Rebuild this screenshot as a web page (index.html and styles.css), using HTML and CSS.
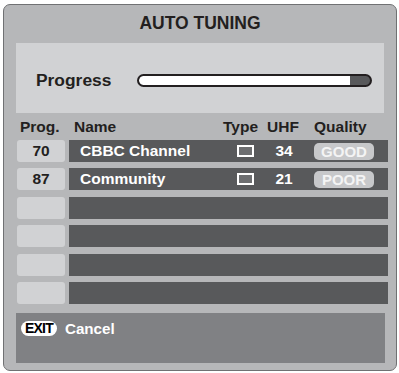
FILE: index.html
```html
<!DOCTYPE html>
<html>
<head>
<meta charset="utf-8">
<link rel="stylesheet" href="styles.css">
</head>
<body>
<div class="panel">
  <div class="title">AUTO TUNING</div>
  <div class="progress-box">
    <span class="progress-label">Progress</span>
    <div class="bar"><div class="bar-fill"></div></div>
  </div>
  <div class="table">
    <div class="row head">
      <div class="prog">Prog.</div>
      <div class="main">
        <span class="name">Name</span>
        <span class="type">Type</span>
        <span class="uhf">UHF</span>
        <span class="quality">Quality</span>
      </div>
    </div>
    <div class="row">
      <div class="prog cell">70</div>
      <div class="main bar-row">
        <span class="name">CBBC Channel</span>
        <span class="type"><span class="tv"></span></span>
        <span class="uhf">34</span>
        <span class="quality"><span class="badge">GOOD</span></span>
      </div>
    </div>
    <div class="row">
      <div class="prog cell">87</div>
      <div class="main bar-row">
        <span class="name">Community</span>
        <span class="type"><span class="tv"></span></span>
        <span class="uhf">21</span>
        <span class="quality"><span class="badge">POOR</span></span>
      </div>
    </div>
    <div class="row"><div class="prog cell"></div><div class="main bar-row"></div></div>
    <div class="row"><div class="prog cell"></div><div class="main bar-row"></div></div>
    <div class="row"><div class="prog cell"></div><div class="main bar-row"></div></div>
    <div class="row"><div class="prog cell"></div><div class="main bar-row"></div></div>
  </div>
  <div class="footer">
    <span class="exit">EXIT</span>
    <span class="cancel">Cancel</span>
  </div>
</div>
</body>
</html>
```
FILE: styles.css
```css
html, body {
  margin: 0;
  padding: 0;
  background: #ffffff;
}
body {
  font-family: "Liberation Sans", Arial, sans-serif;
  font-weight: bold;
  color: #231f20;
}
.panel {
  box-sizing: border-box;
  width: 394px;
  height: 367px;
  margin: 4px 0 0 3px;
  background: #b6b7b9;
  border: 1px solid #707173;
  border-radius: 7px;
  display: flex;
  flex-direction: column;
}
.title {
  height: 38px;
  display: flex;
  align-items: center;
  justify-content: center;
  font-size: 17.5px;
  padding-bottom: 2px;
  box-sizing: border-box;
}
.progress-box {
  box-sizing: border-box;
  margin-left: 12px;
  width: 368px;
  height: 70px;
  background: #d1d2d4;
  display: flex;
  align-items: center;
  padding: 4px 0 0 20px;
}
.progress-label {
  font-size: 17.4px;
  width: 101px;
}
.bar {
  box-sizing: border-box;
  width: 235px;
  height: 13px;
  border: 2px solid #231f20;
  border-radius: 7px;
  background: #58595b;
  overflow: hidden;
}
.bar-fill {
  width: 211px;
  height: 100%;
  background: #ffffff;
  border-radius: 5px 0 0 5px;
}
.table {
  margin-left: 13px;
  display: flex;
  flex-direction: column;
  gap: 6.4px;
  font-size: 15.5px;
}
.row {
  display: grid;
  grid-template-columns: 48px 319px;
  column-gap: 4px;
  height: 22px;
  line-height: 22px;
}
.row.head {
  height: 27px;
  line-height: 27px;
  margin-bottom: -6.4px;
}
.head .prog {
  padding-left: 3px;
}
.cell {
  background: #d1d2d4;
  border-radius: 3px;
  text-align: center;
}
.main {
  display: flex;
  align-items: center;
  padding-left: 11px;
}
.head .main {
  padding-left: 5px;
}
.bar-row {
  background: #58595b;
  color: #ffffff;
}
.name {
  flex: 1;
}
.type {
  width: 29px;
  display: flex;
  align-items: center;
}
.head .type {
  width: 35px;
  margin-right: 9px;
}
.tv {
  box-sizing: border-box;
  width: 17px;
  height: 12px;
  border: 2px solid #ffffff;
  background: #6d6e70;
}
.uhf {
  width: 36px;
  text-align: center;
  margin-right: 12px;
}
.head .uhf {
  width: 31px;
  margin-right: 16px;
}
.quality {
  width: 74px;
  display: flex;
  align-items: center;
}
.badge {
  box-sizing: border-box;
  width: 60px;
  height: 17px;
  line-height: 17px;
  border-radius: 5px;
  background: #c7c8ca;
  color: #f4f4f4;
  text-align: center;
  font-size: 15px;
}
.footer {
  box-sizing: border-box;
  margin: 9px 0 0 12px;
  width: 369px;
  height: 50px;
  background: #808184;
  display: flex;
  align-items: center;
  align-self: flex-start;
  padding: 0 0 18px 5px;
  color: #ffffff;
  font-size: 15.2px;
}
.exit {
  background: #ffffff;
  color: #000000;
  border-radius: 8px;
  height: 15px;
  line-height: 15px;
  padding: 0 4px;
  font-size: 14px;
  letter-spacing: -0.8px;
  margin-right: 8px;
}
```
